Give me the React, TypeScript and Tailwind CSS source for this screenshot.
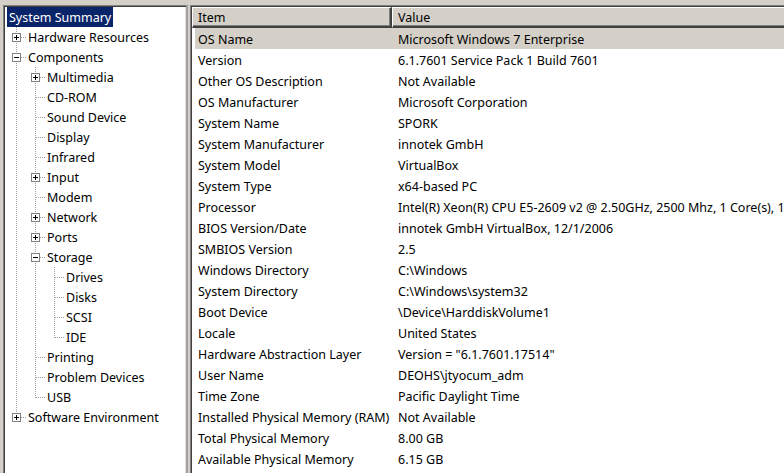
import React from "react";

type Node = { label: string; children?: Node[]; expanded?: boolean };

const tree: Node[] = [
  { label: "Hardware Resources", children: [{ label: "x" }], expanded: false },
  {
    label: "Components",
    expanded: true,
    children: [
      { label: "Multimedia", children: [{ label: "x" }], expanded: false },
      { label: "CD-ROM" },
      { label: "Sound Device" },
      { label: "Display" },
      { label: "Infrared" },
      { label: "Input", children: [{ label: "x" }], expanded: false },
      { label: "Modem" },
      { label: "Network", children: [{ label: "x" }], expanded: false },
      { label: "Ports", children: [{ label: "x" }], expanded: false },
      {
        label: "Storage",
        expanded: true,
        children: [{ label: "Drives" }, { label: "Disks" }, { label: "SCSI" }, { label: "IDE" }],
      },
      { label: "Printing" },
      { label: "Problem Devices" },
      { label: "USB" },
    ],
  },
  { label: "Software Environment", children: [{ label: "x" }], expanded: false },
];

type Row = { label: string; ancestorsMore: boolean[]; last: boolean; box: "none" | "plus" | "minus" };

function flatten(nodes: Node[], ancestorsMore: boolean[], out: Row[]) {
  nodes.forEach((n, i) => {
    const last = i === nodes.length - 1;
    const hasKids = !!n.children && n.children.length > 0;
    out.push({
      label: n.label,
      ancestorsMore,
      last,
      box: hasKids ? (n.expanded ? "minus" : "plus") : "none",
    });
    if (hasKids && n.expanded) flatten(n.children!, [...ancestorsMore, !last], out);
  });
}

const rows: Row[] = [];
flatten(tree, [], rows);

const DOT = "#a0a0a0";

function VLineCell() {
  return (
    <svg width="19" height="20" className="shrink-0" shapeRendering="crispEdges">
      <line x1="9.5" y1="0" x2="9.5" y2="20" stroke={DOT} strokeDasharray="1 1" />
    </svg>
  );
}

function EmptyCell() {
  return <div className="w-[19px] h-[20px] shrink-0" />;
}

function ConnectorCell({ last, box }: { last: boolean; box: Row["box"] }) {
  return (
    <svg width="19" height="20" className="shrink-0" shapeRendering="crispEdges">
      <line x1="9.5" y1="0" x2="9.5" y2={last ? 11 : 20} stroke={DOT} strokeDasharray="1 1" />
      <line x1="10" y1="10.5" x2="19" y2="10.5" stroke={DOT} strokeDasharray="1 1" />
      {box !== "none" && (
        <g>
          <rect x="5.5" y="6.5" width="8" height="8" fill="#ffffff" stroke="#808080" />
          <line x1="7" y1="10.5" x2="12" y2="10.5" stroke="#000000" />
          {box === "plus" && <line x1="9.5" y1="8" x2="9.5" y2="13" stroke="#000000" />}
        </g>
      )}
    </svg>
  );
}

const items: [string, string][] = [
  ["OS Name", "Microsoft Windows 7 Enterprise"],
  ["Version", "6.1.7601 Service Pack 1 Build 7601"],
  ["Other OS Description", "Not Available"],
  ["OS Manufacturer", "Microsoft Corporation"],
  ["System Name", "SPORK"],
  ["System Manufacturer", "innotek GmbH"],
  ["System Model", "VirtualBox"],
  ["System Type", "x64-based PC"],
  ["Processor", "Intel(R) Xeon(R) CPU E5-2609 v2 @ 2.50GHz, 2500 Mhz, 1 Core(s), 1 Logical Processor(s)"],
  ["BIOS Version/Date", "innotek GmbH VirtualBox, 12/1/2006"],
  ["SMBIOS Version", "2.5"],
  ["Windows Directory", "C:\\Windows"],
  ["System Directory", "C:\\Windows\\system32"],
  ["Boot Device", "\\Device\\HarddiskVolume1"],
  ["Locale", "United States"],
  ["Hardware Abstraction Layer", 'Version = "6.1.7601.17514"'],
  ["User Name", "DEOHS\\jtyocum_adm"],
  ["Time Zone", "Pacific Daylight Time"],
  ["Installed Physical Memory (RAM)", "Not Available"],
  ["Total Physical Memory", "8.00 GB"],
  ["Available Physical Memory", "6.15 GB"],
];

export default function App() {
  return (
    <div
      className="w-[784px] h-[473px] overflow-hidden bg-[#d4d0c8] flex pt-[5px] pl-[3px] text-[12.5px] text-black"
      style={{ fontFamily: '"Noto Sans", "Open Sans", sans-serif' }}
    >
      {/* Left tree pane */}
      <div className="w-[185px] shrink-0 h-[480px] bg-white border-t border-l border-t-[#808080] border-l-[#808080] border-r-2 border-r-[#a0a0a0] shadow-[inset_1px_1px_0_#404040,inset_-1px_0_0_#e4e2dc] pt-[1px] pl-[3px] overflow-hidden">
        <div className="flex flex-col">
          <div className="h-[20px] flex items-center">
            <span className="bg-[#0a246a] text-white h-[20px] leading-[19px] pt-[1px] px-[2px] whitespace-nowrap">
              System Summary
            </span>
          </div>
          {rows.map((r, i) => (
            <div key={i} className="h-[20px] flex items-center">
              {r.ancestorsMore.map((m, j) => (m ? <VLineCell key={j} /> : <EmptyCell key={j} />))}
              <ConnectorCell last={r.last} box={r.box} />
              <span className="pl-[2px] leading-[20px] pt-[1px] whitespace-nowrap">{r.label}</span>
            </div>
          ))}
        </div>
      </div>

      {/* Splitter */}
      <div className="w-[2px] shrink-0" />

      {/* Right list pane */}
      <div className="flex-1 h-[480px] bg-white border-t border-l border-t-[#808080] border-l-[#808080] shadow-[inset_1px_1px_0_#404040] pt-[1px] pl-[1px] overflow-hidden">
        <div className="flex h-[21px] whitespace-nowrap">
          <div className="w-[200px] shrink-0 bg-[#d4d0c8] border-t border-l border-white border-r-2 border-r-[#404040] border-b-2 border-b-[#404040] shadow-[inset_-1px_-1px_0_#808080] pl-[5px] leading-[18px] pt-[1px]">
            Item
          </div>
          <div className="flex-1 bg-[#d4d0c8] border-t border-l border-white border-b-2 border-b-[#404040] shadow-[inset_0_-1px_0_#808080] pl-[5px] leading-[18px] pt-[1px]">
            Value
          </div>
        </div>
        <div className="flex flex-col">
          {items.map(([k, v], i) => (
            <div
              key={i}
              className={
                "h-[21px] flex items-center whitespace-nowrap ml-[3px] pt-[4px] " + (i === 0 ? "bg-[#d4d0c8]" : "")
              }
            >
              <div className="w-[197px] shrink-0 pl-[3px] overflow-hidden">{k}</div>
              <div className="pl-[6px]">{v}</div>
            </div>
          ))}
        </div>
      </div>
    </div>
  );
}
